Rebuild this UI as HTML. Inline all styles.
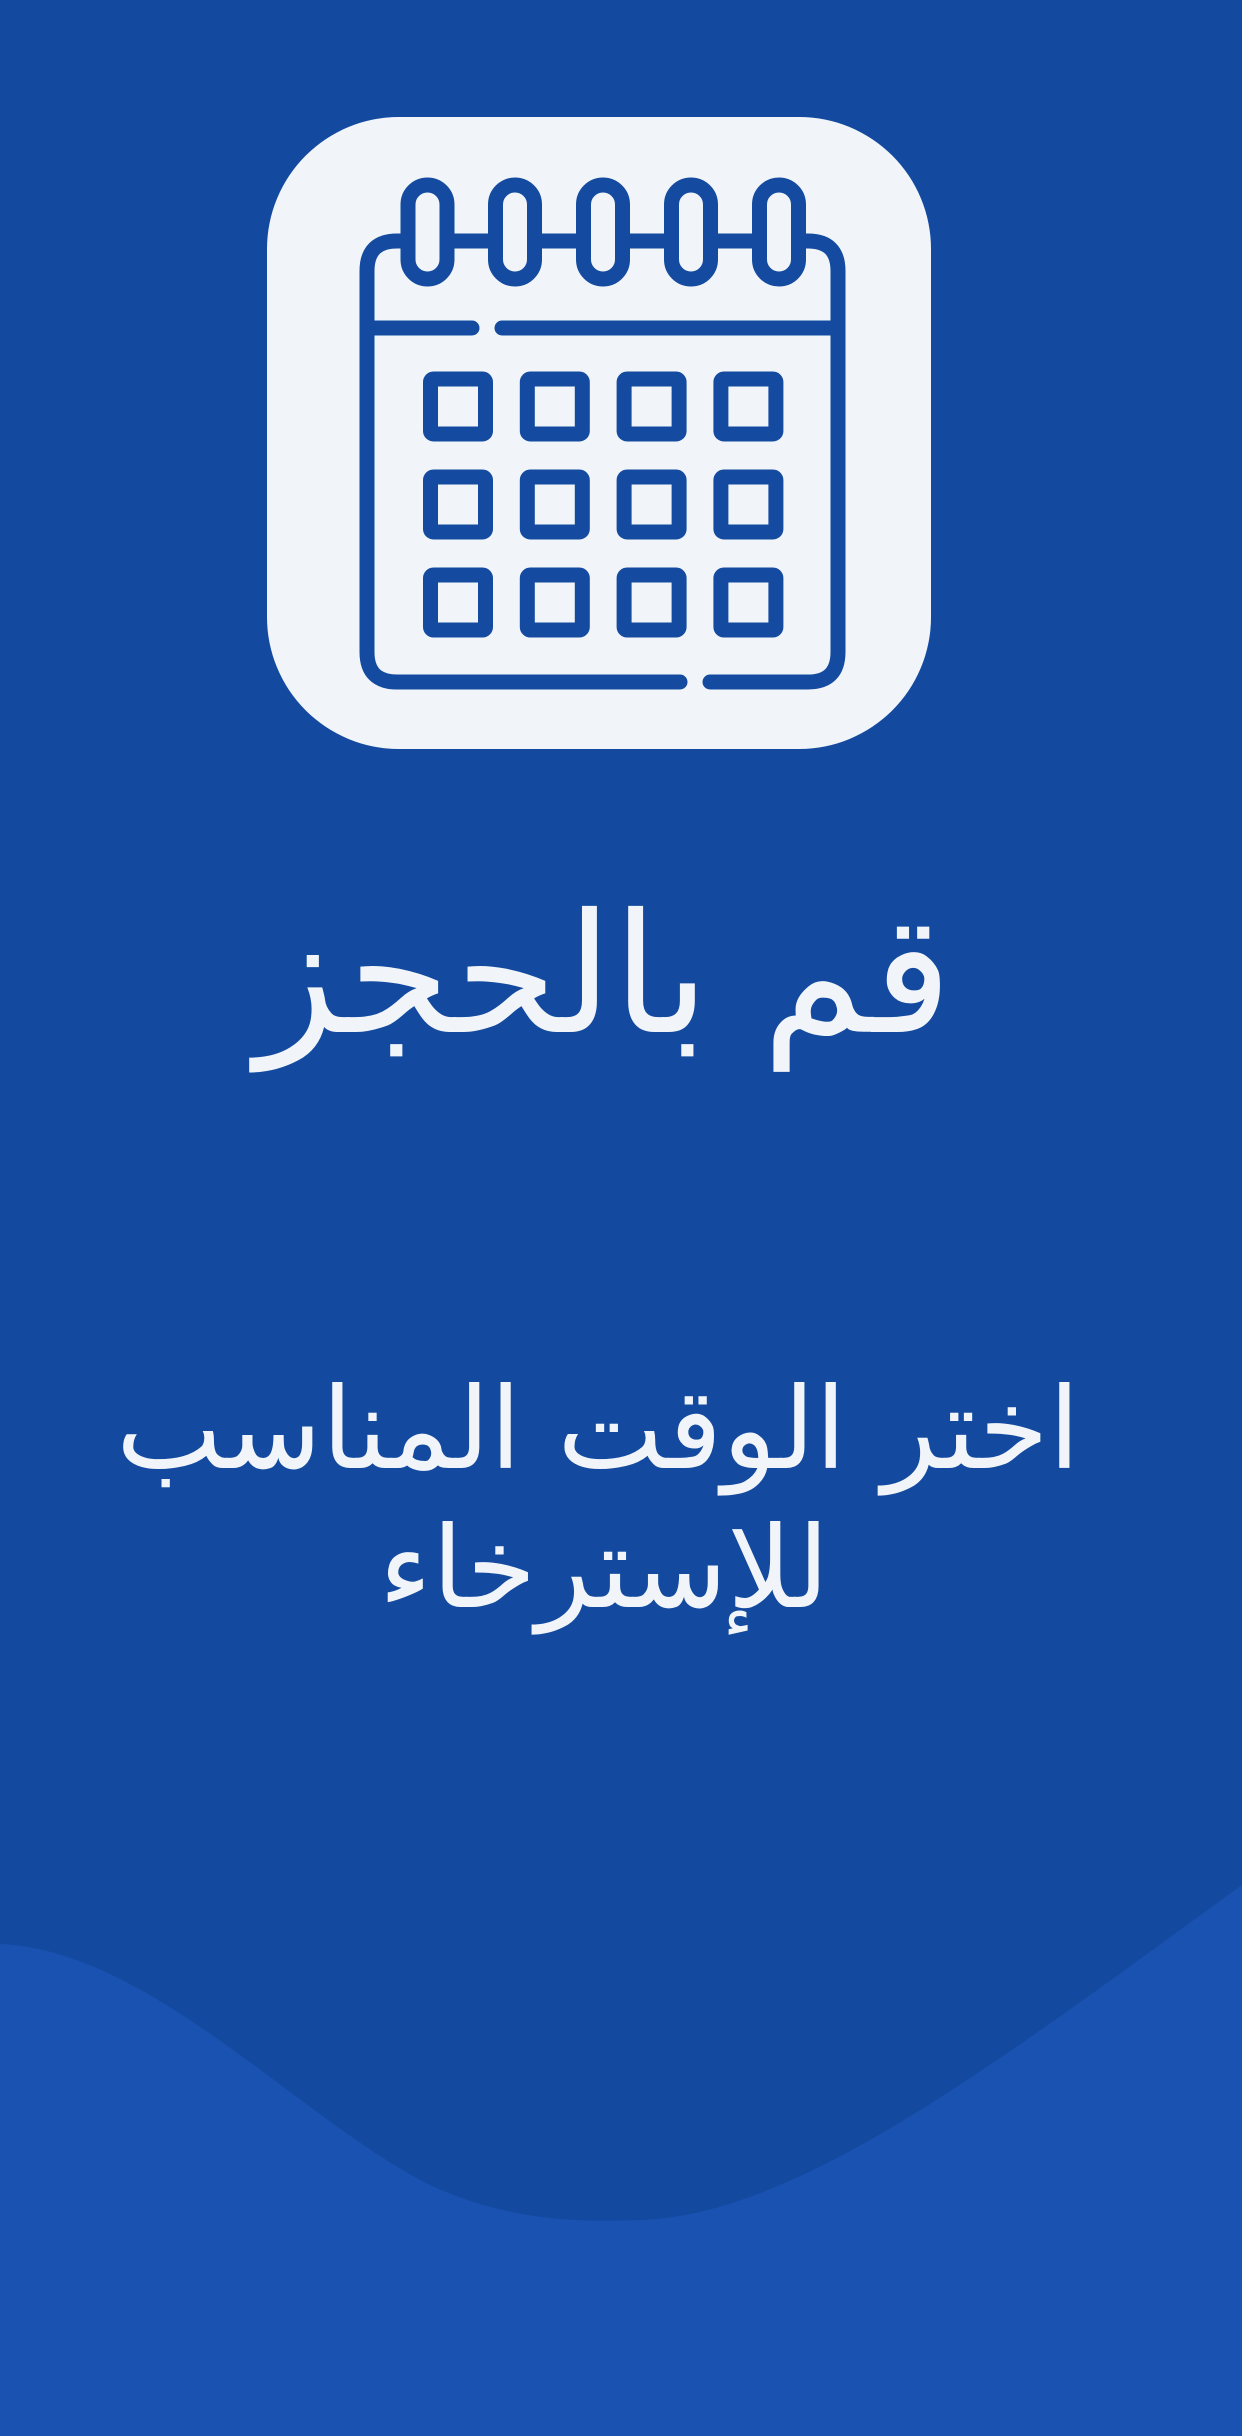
<!DOCTYPE html>
<html><head><meta charset="utf-8"><style>
html,body{margin:0;padding:0;}
body{width:1242px;height:2436px;overflow:hidden;background:#134a9f;}
svg{display:block}
</style></head><body>
<svg width="1242" height="2436" viewBox="0 0 1242 2436" xmlns="http://www.w3.org/2000/svg">
<rect width="1242" height="2436" fill="#134a9f"/>
<path d="M0,1944 C150,1950 300,2120 430,2185 C510,2222 580,2222 640,2220 C800,2215 1000,2060 1242,1885 L1242,2436 L0,2436 Z" fill="#1952b0"/>
<g transform="translate(267,117)">
<rect x="0" y="0" width="664" height="632" rx="132" fill="#f1f5f9"/>
<g fill="none" stroke="#144ba0" stroke-width="15" stroke-linecap="round" stroke-linejoin="round">
<path d="M205,211 H100 V154 Q100,124 130,124 H541 Q571,124 571,154 V211 H235"/>
<path d="M100,211 V535 Q100,565 130,565 H413 M443,565 H541 Q571,565 571,535 V211"/>
<g fill="#f1f5f9">
<rect x="141" y="68" width="39" height="94" rx="19.5"/>
<rect x="228.5" y="68" width="39" height="94" rx="19.5"/>
<rect x="316.5" y="68" width="39" height="94" rx="19.5"/>
<rect x="404.5" y="68" width="39" height="94" rx="19.5"/>
<rect x="492.5" y="68" width="39" height="94" rx="19.5"/>
</g>
<g stroke-linecap="butt" stroke-linejoin="round">
<rect x="163.5" y="262" width="55" height="55" rx="3"/>
<rect x="260.3" y="262" width="55" height="55" rx="3"/>
<rect x="357.1" y="262" width="55" height="55" rx="3"/>
<rect x="453.9" y="262" width="55" height="55" rx="3"/>
<rect x="163.5" y="360" width="55" height="55" rx="3"/>
<rect x="260.3" y="360" width="55" height="55" rx="3"/>
<rect x="357.1" y="360" width="55" height="55" rx="3"/>
<rect x="453.9" y="360" width="55" height="55" rx="3"/>
<rect x="163.5" y="458" width="55" height="55" rx="3"/>
<rect x="260.3" y="458" width="55" height="55" rx="3"/>
<rect x="357.1" y="458" width="55" height="55" rx="3"/>
<rect x="453.9" y="458" width="55" height="55" rx="3"/>
</g>
</g>
</g>
<g fill="#f1f5f9" font-family="'DejaVu Sans', 'Liberation Sans', sans-serif" text-anchor="middle" direction="rtl">
<text x="604" y="1032" font-size="166">قم بالحجز</text>
<text x="598" y="1468" font-size="113">اختر الوقت المناسب</text>
<text x="604" y="1607" font-size="113">للإسترخاء</text>
</g>
</svg>
</body></html>
